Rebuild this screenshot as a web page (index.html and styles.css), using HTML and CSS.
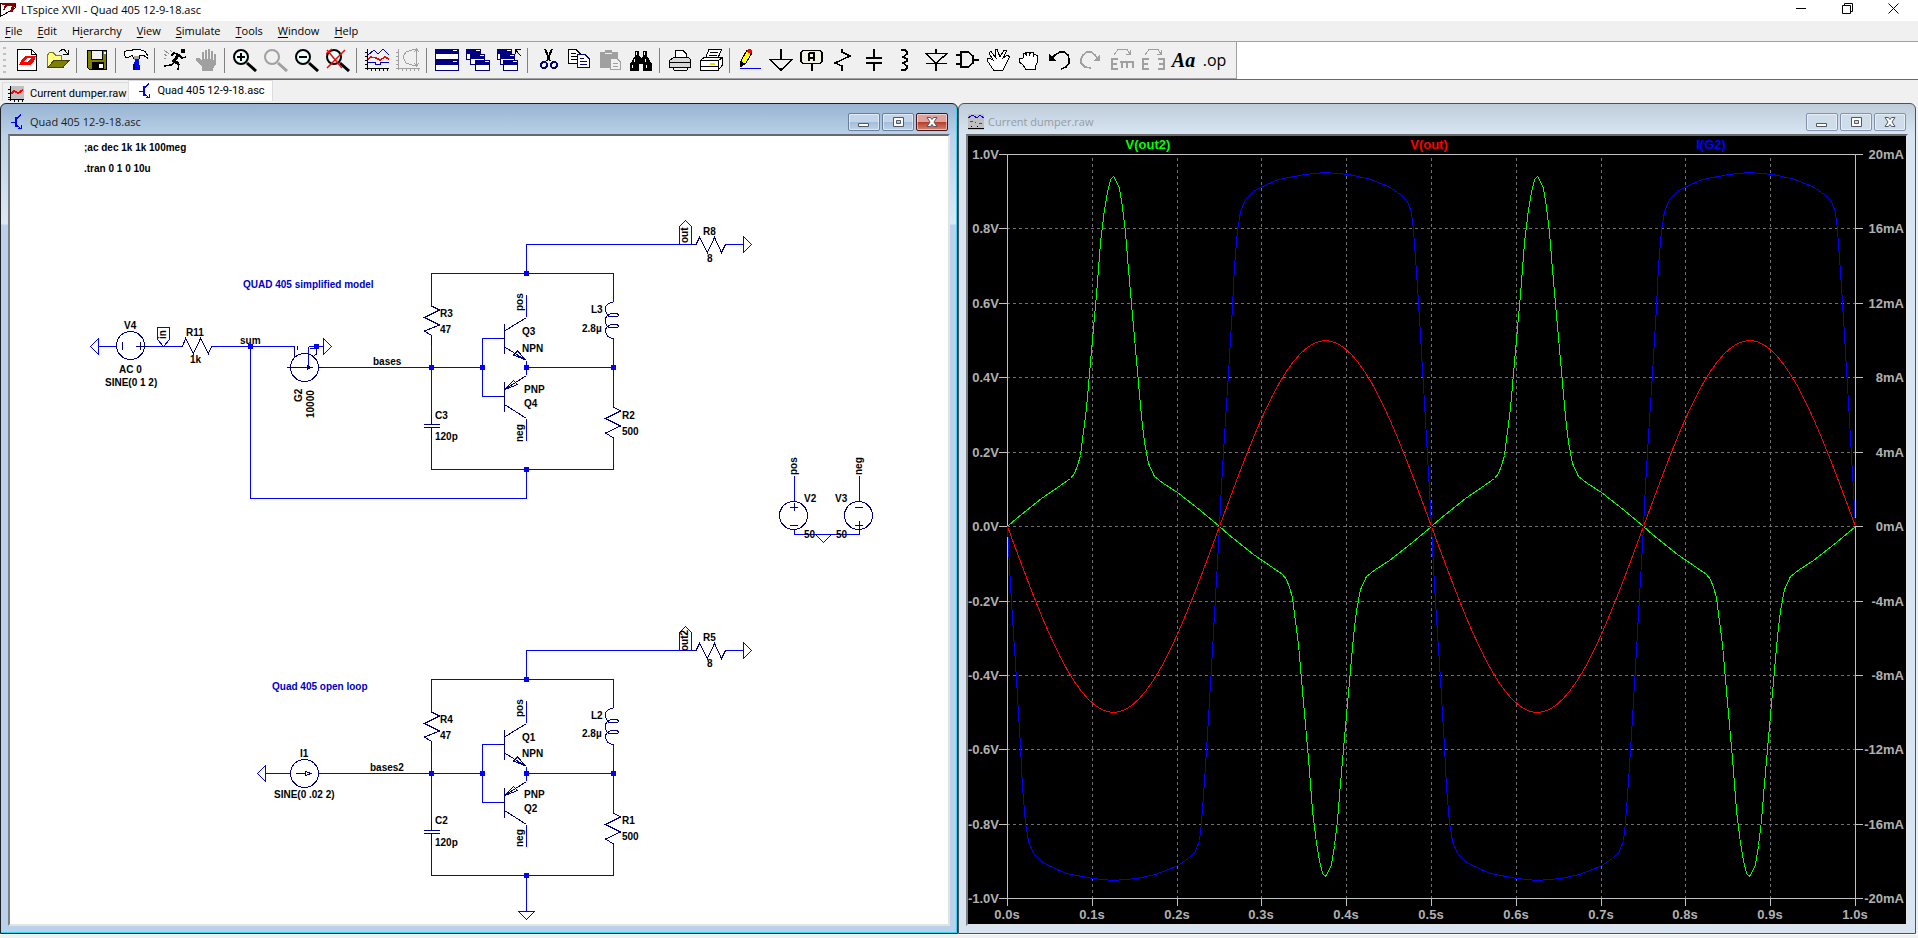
FILE: index.html
```html
<!DOCTYPE html>
<html lang="en">
<head>
<meta charset="utf-8">
<title>LTspice XVII - Quad 405 12-9-18.asc</title>
<link rel="stylesheet" href="styles.css">
</head>
<body>
<svg class="defs" aria-hidden="true">
  <defs>
    <g id="npn-icon" fill="none" stroke="#0000ff"><path d="M1 8.500H5M6 5.500L11 .5M6 10.500L11 15M8 14.500H11.500V11"/><path stroke-width="2" d="M6 3V13"/></g>
    <g id="lens"><circle cx="8" cy="9" r="7" stroke-width="2"/><path stroke-width="3" d="M14 15L23 23"/></g>
    <g id="win"><path fill="#000080" d="M0 0H15V4H0Z"/><path fill="#fff" stroke="#000080" d="M.5 4.500H14.500V10.500H.5Z"/><path stroke="#fff" d="M10 1.500H14"/></g>
  </defs>
</svg>

<header class="titlebar">
  <svg class="app-icon" viewBox="0 0 17 17"><path fill="#fff" stroke="#000" d="M.5 2V15.500L15 7V2Z"/><path fill="#8b0000" d="M2 2H16L13 11H10L12 5H7L5 9H3L5 4H2Z"/><path fill="#fff" d="M6 6H10L8 8H5Z"/></svg>
  <h1 class="app-title">LTspice XVII - Quad 405 12-9-18.asc</h1>
  <div class="caption">
    <button class="caption-btn" aria-label="Minimize"><svg viewBox="0 0 11 11"><path d="M0 5.500H10"/></svg></button>
    <button class="caption-btn" aria-label="Restore"><svg viewBox="0 0 11 11"><path d="M.5 2.500H8.500V10.500H.5ZM2.500 2.500V.5H10.500V8.500H8.500"/></svg></button>
    <button class="caption-btn" aria-label="Close"><svg viewBox="0 0 11 11"><path d="M.5.5L10.500 10.500M10.500.5L.5 10.500"/></svg></button>
  </div>
</header>

<nav class="menu">
  <button><u>F</u>ile</button><button><u>E</u>dit</button><button>H<u>i</u>erarchy</button><button><u>V</u>iew</button><button><u>S</u>imulate</button><button><u>T</u>ools</button><button><u>W</u>indow</button><button><u>H</u>elp</button>
</nav>

<div class="toolbar-row">
<div class="toolbar" role="toolbar">
  <span class="grip"></span>
  <button class="tool" aria-label="New schematic"><svg viewBox="0 0 24 24"><path fill="#fff" stroke="#000" d="M2.500 1.500H16.500L21.500 6.500V22.500H2.500Z"/><path fill="none" stroke="#000" d="M16.500 1.500V6.500H21.500"/><path fill="#f00" d="M10 8H15L12 10L9 14H12L9 17H4L6 13ZM14 8H21L19 13L15 17H9L13 14L16 10H13Z"/></svg></button>
  <button class="tool" aria-label="Open"><svg viewBox="0 0 24 24"><path fill="#ffff80" stroke="#808000" d="M1.500 19V7L3.500 4.500H7L9.500 7H15.500V12"/><path fill="#808000" stroke="#404000" d="M1.500 19.500L8 12.500H23L17 19.500Z"/><path fill="none" stroke="#000" d="M13 4L16 1.500H18L22 6M17 6.500H22.500V2"/></svg></button>
  <span class="sep"></span>
  <button class="tool" aria-label="Save"><svg viewBox="0 0 24 24"><path fill="#808000" stroke="#000" d="M2.500 2.500H21.500V21.500H4.500L2.500 19.500Z"/><path fill="#f0f0f0" stroke="#000" d="M6.500 2.500H17.500V11.500H6.500Z"/><path d="M7 14H19V21H7Z"/><path fill="#fff" d="M14 16H18V20H14ZM19 4H21V6H19Z"/></svg></button>
  <span class="sep"></span>
  <button class="tool" aria-label="Control panel"><svg viewBox="0 0 24 24"><path fill="#fff" stroke="#000" d="M.5 3.500L3 2.500H7L10 1.500H16L21 3.500L24 8V10.500L20 7.500H16L15 10.500H10L8 7.500L4 9.500H2L.5 7Z"/><path fill="#a0a0a0" d="M10 8H15V12H10Z"/><path fill="#0000ff" d="M11 11H15L16 22H9Z"/><path fill="#000080" d="M9 16H11V22H9Z"/></svg></button>
  <span class="sep"></span>
  <button class="tool" aria-label="Run"><svg viewBox="0 0 24 24"><path d="M18 1H22V5H18Z"/><path fill="none" stroke="#000" stroke-width="3" d="M16 6L11 13L16 16"/><path fill="none" stroke="#000" stroke-width="1.500" d="M16 16L15 22M8 8L11 5L16 7L19 10L23 9M12 14L8 17L1 18"/><path fill="none" stroke="#909090" d="M1 2L6 6M1 6L4 8M1 10L3 11M7 2L9 4"/></svg></button>
  <button class="tool" aria-label="Halt"><svg viewBox="0 0 24 24"><path fill="#a0a0a0" d="M8 22V19L2 13V10H5L8 13V4H10V11H11V2H13V11H14V1H16V11H17V3H19V12H20V6H22V16L19 21V23H8Z"/></svg></button>
  <span class="sep"></span>
  <button class="tool" aria-label="Zoom in"><svg class="soft" viewBox="0 0 24 24"><use href="#lens" fill="#e8ffff" stroke="#000"/><path stroke="#000" stroke-width="2" d="M8 5V13M4 9H12"/></svg></button>
  <button class="tool" aria-label="Pan"><svg class="soft" viewBox="0 0 24 24"><use href="#lens" fill="#f0f0f0" stroke="#a0a0a0"/></svg></button>
  <button class="tool" aria-label="Zoom out"><svg class="soft" viewBox="0 0 24 24"><use href="#lens" fill="#e8ffff" stroke="#000"/><path stroke="#000" stroke-width="2" d="M4 9H12"/></svg></button>
  <button class="tool" aria-label="Zoom full extents"><svg class="soft" viewBox="0 0 24 24"><use href="#lens" fill="#e8ffff" stroke="#000"/><path stroke="#f00" stroke-width="1.500" d="M1 2L16 20M19 2L1 20M0 6L6 1"/></svg></button>
  <span class="sep"></span>
  <button class="tool" aria-label="Autorange"><svg viewBox="0 0 24 24"><path fill="none" stroke="#000" d="M2.500 1V22M0 20.500H24M0 4.500H2M0 8.500H2M0 12.500H2M0 16.500H2M6.500 20V23M10.500 20V23M14.500 20V23M18.500 20V23M22.500 20V23"/><path fill="none" stroke="#0000c0" d="M3 7L9 2L13 6L18 1L24 7M3 14.500H10V16.500H15V14.500H24"/><path fill="none" stroke="#f00" stroke-width="1.500" d="M3 11L6 9L11 10L15 12L20 9L24 11"/></svg></button>
  <button class="tool" aria-label="Smith chart"><svg viewBox="0 0 24 24"><path fill="none" stroke="#a0a0a0" d="M2.500 1V22M0 20.500H24M0 4.500H2M0 8.500H2M0 12.500H2M0 16.500H2M6.500 20V23M10.500 20V23M14.500 20V23M18.500 20V23M22.500 20V23M19 1L10 4L7 9L10 15L19 18M20.500 2V18M18 4L20.500 1L23 4M18 15L20.500 18L23 15"/></svg></button>
  <span class="sep"></span>
  <button class="tool" aria-label="Tile windows"><svg viewBox="0 0 24 24"><path fill="#000080" d="M0 1H24V5H0ZM0 12H24V16H0Z"/><path fill="#fff" stroke="#000080" d="M.5 5.500H23.500V11.500H.5ZM.5 16.500H23.500V22.500H.5Z"/><path stroke="#fff" d="M18 2.500H22M18 13.500H22"/></svg></button>
  <button class="tool" aria-label="Cascade windows"><svg viewBox="0 0 24 24"><use href="#win" x="0" y="1"/><use href="#win" x="4" y="6"/><use href="#win" x="9" y="12"/></svg></button>
  <button class="tool" aria-label="Close windows"><svg viewBox="0 0 24 24"><use href="#win" x="0" y="1"/><use href="#win" x="3" y="6"/><use href="#win" x="6" y="12"/><path fill="none" stroke="#000" d="M18 6V1.500H24M18.500 2L24 8"/></svg></button>
  <span class="sep"></span>
  <button class="tool" aria-label="Cut"><svg viewBox="0 0 24 24"><path fill="none" stroke="#000" stroke-width="2" d="M9 1L14 13M16 1L11 13"/><g fill="none" stroke="#000080" stroke-width="2"><circle cx="8" cy="17" r="3"/><circle cx="18" cy="17" r="3"/></g></svg></button>
  <button class="tool" aria-label="Copy"><svg viewBox="0 0 24 24"><path fill="#fff" stroke="#000" d="M1.500 1.500H9L13.500 6V15.500H1.500Z"/><path stroke="#000" d="M4 5.500H9M4 8.500H10M4 11.500H10"/><path fill="#fff" stroke="#000080" d="M10.500 6.500H18L22.500 11V19.500H10.500Z"/><path stroke="#000080" d="M13 10.500H17M13 13.500H20M13 16.500H20"/></svg></button>
  <button class="tool" aria-label="Paste"><svg viewBox="0 0 24 24"><path fill="#a0a0a0" d="M2 4H7V2H14V4H20V20H2Z"/><path fill="#f0f0f0" stroke="#a0a0a0" d="M12.500 10.500H19L22.500 14V21.500H12.500Z"/><path stroke="#a0a0a0" d="M15 15.500H20M15 18.500H20"/><path fill="#f0f0f0" d="M7 5H14V6H7Z"/></svg></button>
  <button class="tool" aria-label="Find"><svg viewBox="0 0 24 24"><path d="M6 3H10V8L12 10L14 8V3H18V8L23 16V23H14V16H10V23H1V16L6 8Z"/><path fill="#fff" d="M7 4H8V7H7ZM15 4H16V7H15ZM5 11H6V14H5ZM16 11H17V14H16ZM3 17H4V20H3ZM17 17H18V20H17Z"/></svg></button>
  <span class="sep"></span>
  <button class="tool" aria-label="Print"><svg viewBox="0 0 24 24"><path fill="#fff" stroke="#000" d="M7.500 10V2.500H15L18.500 6V10"/><path fill="#d8d8d8" stroke="#000" d="M5.500 9.500H20.500L22.500 11.500V19.500H1.500V12.500Z"/><path stroke="#000" d="M2 14.500H22M6 22.500H19M5.500 19V22M19.500 19V22"/></svg></button>
  <button class="tool" aria-label="Print preview"><svg viewBox="0 0 24 24"><path fill="#fff" stroke="#000" d="M6.500 10L10 1.500H22.500L19 10"/><path stroke="#000" d="M11 4.500H19M10 7.500H18"/><path fill="#fff" stroke="#000" d="M1.500 12.500L5 9.500H23.500V17L19 22.500H1.500ZM1.500 12.500H19.500L23.500 9.500M19.500 12.500V22"/><path stroke="#000" d="M2 18.500H19"/><path stroke="#e8e000" stroke-width="2" d="M11 15.500H16"/></svg></button>
  <span class="sep"></span>
  <button class="tool" aria-label="Draw wire"><svg viewBox="0 0 24 24"><path fill="#ffff00" stroke="#000" d="M3.500 12L9 2L14 5L8 15L3.500 18Z"/><path fill="#f00" d="M8 3L10 1H13L14 3L13 6Z"/><path d="M2 13L6 15L2 19Z"/><path stroke="#0000ff" d="M2 20.500H23"/></svg></button>
  <button class="tool" aria-label="Ground"><svg viewBox="0 0 24 24"><path fill="none" stroke="#000" stroke-width="1.500" d="M12 1V11M1 11.500H23L12 22Z"/></svg></button>
  <button class="tool" aria-label="Label net"><svg viewBox="0 0 24 24"><path fill="#f0f0e0" stroke="#000" stroke-width="1.500" d="M3 2.500H20L22 4.500V13L20 15.500H3L1 13V4.500Z"/><path stroke="#000" stroke-width="1.500" d="M12 16V23"/><path fill="none" stroke="#000" stroke-width="2" d="M9 13V6L10 5H14V13M9 10H14"/></svg></button>
  <button class="tool" aria-label="Resistor"><svg viewBox="0 0 24 24"><path fill="none" stroke="#000" stroke-width="1.500" d="M11 1V4L19 8L4 15L11 18V23"/></svg></button>
  <button class="tool" aria-label="Capacitor"><svg viewBox="0 0 24 24"><path fill="none" stroke="#000" stroke-width="2" d="M4 10H20M4 15H20"/><path stroke="#000" stroke-width="1.500" d="M12 1V10M12 15V23"/></svg></button>
  <button class="tool" aria-label="Inductor"><svg viewBox="0 0 24 24"><path fill="none" stroke="#000" stroke-width="1.500" d="M8 2H12L14 4V6L10 9L14 11V13L10 15L14 18V20L12 22H8"/></svg></button>
  <button class="tool" aria-label="Diode"><svg viewBox="0 0 24 24"><path fill="none" stroke="#000" stroke-width="1.500" d="M12 1V5M2 5.500H23L12 15ZM2 15.500H23M12 15V23"/></svg></button>
  <button class="tool" aria-label="Component"><svg viewBox="0 0 24 24"><path fill="none" stroke="#000" stroke-width="1.500" d="M1 7H6M1 16H6M6 4V19H13L18 15V8L13 4ZM18 12H24"/></svg></button>
  <button class="tool" aria-label="Move"><svg viewBox="0 0 24 24"><path fill="#fff" stroke="#000" d="M7.500 22L1.500 13V10.500H4L7 12L3 5L5 3.500L10 10L9 2L11 1.500L14 9L18 2L20.500 3L17 10L22 7L23.500 9L19.500 17L17 22Z"/></svg></button>
  <button class="tool" aria-label="Drag"><svg viewBox="0 0 24 24"><path fill="#fff" stroke="#000" d="M8.500 21L6 17L2.500 14V10.500L6 10V6L8.500 5L9.500 8V4H12L12.500 8L13.500 4H16L16.500 8L18 6L20.500 8V14L18.500 18V21Z"/></svg></button>
  <button class="tool" aria-label="Undo"><svg viewBox="0 0 24 24"><path fill="none" stroke="#000" stroke-width="1.500" d="M4 10L7 7L12 4H16L20 7L21 11V15L18 19L13 21"/><path d="M1 6V13H8Z"/></svg></button>
  <button class="tool" aria-label="Redo"><svg viewBox="0 0 24 24"><path fill="none" stroke="#a0a0a0" stroke-width="1.500" d="M18 10L16 7L12 4H8L4 7L2 11V15L6 19L12 20"/><path fill="#a0a0a0" d="M21 6V13H14Z"/></svg></button>
  <button class="tool" aria-label="Rotate"><svg viewBox="0 0 24 24"><path fill="none" stroke="#a0a0a0" d="M4 7L8 1.500H17L20 6M16 6H20.500V2"/><path fill="none" stroke="#a0a0a0" stroke-width="2" d="M8 11H2V21H8M2 16H7M10 14H24M12 14V20M17 14V20M23 14V20"/></svg></button>
  <button class="tool" aria-label="Mirror"><svg viewBox="0 0 24 24"><path fill="none" stroke="#a0a0a0" d="M4 7L8 1.500H17L20 6M16 6H20.500V2"/><path fill="none" stroke="#a0a0a0" stroke-width="2" d="M8 11H2V21H8M2 16H7M17 11H23V21H17M23 16H18"/></svg></button>
  <button class="tool tool-text">Aa</button>
  <button class="tool tool-op">.op</button>
</div>
</div>

<div class="tabs" role="tablist">
  <button class="tab" role="tab"><svg class="tab-icon" viewBox="0 0 16 16"><path fill="#c0c0c0" d="M2 0H16V13H2Z"/><path stroke="#000" fill="none" d="M2.500 0V15M0 13.500H16M0 3.500H2M0 7.500H2M0 11H2M6.500 13V16M10.500 13V16M14.500 13V16"/><path fill="none" stroke="#f00" stroke-width="2" d="M3 8L6 5L10 7L15 4"/></svg>Current dumper.raw</button>
  <button class="tab tab-active" role="tab" aria-selected="true"><svg class="tab-icon" viewBox="0 0 16 16"><use href="#npn-icon"/></svg>Quad 405 12-9-18.asc</button>
</div>

<main class="workspace">
<section class="window window-active">
  <div class="window-title">
    <svg class="win-icon" viewBox="0 0 16 16"><use href="#npn-icon"/></svg>
    <h2>Quad 405 12-9-18.asc</h2>
    <button class="wbtn" aria-label="Minimize"><svg viewBox="0 0 14 12"><path d="M1.500 7.500H11.500V10.500H1.500Z"/></svg></button>
    <button class="wbtn" aria-label="Maximize"><svg viewBox="0 0 14 12"><path fill-rule="evenodd" d="M2.500 1.500H12.500V10.500H2.500ZM5.500 4.500V7.500H9.500V4.500Z"/></svg></button>
    <button class="wbtn wbtn-close" aria-label="Close"><svg viewBox="0 0 14 12"><path d="M2 1.500H5.500L7 3.500L8.500 1.500H12L9 6L12 10.500H8.500L7 8.500L5.500 10.500H2L5 6Z"/></svg></button>
  </div>
  <svg class="client schematic" viewBox="10 136 938 788">
    <defs>
      <g id="amp">
        <g class="wire">
          <path d="M526.500 273.500V244.500H696M431.500 306V273.500H613.500V302M431.500 336V424M431.500 428V469.500H613.500V438M613.500 338V407M431.500 367.500H482.500M499 338.500H482.500V396.500H499M526.500 361V375M526.500 367.500H613.500M526.500 295V317M526.500 419V441M725 244.500H743.500M743.500 236.500V252.500L751.500 244.500ZM679.500 244V226.500L685.500 220.500L691.500 226.500V244"/>
        </g>
        <g class="part">
          <path d="M431.500 306L439.500 310L424.500 317.500L439.500 325L424.500 331L431.500 335.500V345M424 424.500H440M424 427.500H440M431.500 415V424M431.500 428V439M499 338.500H504M504.500 324V354M504.500 331L526.500 317.500M504.500 347L526.500 360.500M526 360L513.500 355L517.500 351ZM499 396.500H504M504.500 382V412M526.500 375.500L504.500 389.500M505 389.500L513.500 380.500L517.500 384.500ZM504.500 404.500L526.500 418.500M613.500 407L620.500 411L605.500 418.500L620.500 426L605.500 433L613.500 438M692 244.500H696L699.500 237.500L707.500 252.500L714.500 237.500L721.500 252.500L725.500 244.500"/>
          <path d="M613.500 302.500Q605.500 303 605.500 309Q606 317 612 317Q619 317 619 315Q617 312.500 611 313.500Q605.500 315 605.500 320Q605.500 328 612 328Q619 328 619 326Q617 323.500 611 324.500Q605.500 326 605.500 331Q606 338 613.500 338.500"/>
        </g>
        <path class="node" d="M429 365h5v5h-5ZM480 365h5v5h-5ZM524 365h5v5h-5ZM611 365h5v5h-5ZM524 271h5v5h-5ZM524 467h5v5h-5Z"/>
      </g>
    </defs>
    <use href="#amp"/>
    <use href="#amp" y="406"/>
    <g class="wire">
      <path d="M98.500 338.500V354.500L90.500 346.500ZM98.500 346.500H116M149 346.500H182M157.500 327.500H169.500V339.500L163.500 346.500L157.500 339.500ZM211 346.500H294.500M250.500 346.500V498.500H526.500V469.500M318 367.500H431M308.500 346.500V367M308.500 346.500H323.500M323.500 338.500V354.500L331.500 346.500Z"/>
      <path d="M794.500 476V501M794.500 530V534.500H859.500V530M859.500 476V501M815.500 534.500L823.500 542.500L831.500 534.500"/>
      <path d="M265.500 765.500V781.500L257.500 773.500ZM265.500 773.500H290M318 773.500H431M526.500 875V911.500M518.500 911.500H534.500L526.500 919.500Z"/>
    </g>
    <g class="part">
      <circle cx="130.500" cy="345.500" r="14"/><circle cx="304.500" cy="367.500" r="14"/><circle cx="793.500" cy="515.500" r="14"/><circle cx="858.500" cy="515.500" r="14"/><circle cx="304.500" cy="773.500" r="14"/>
      <path d="M122.500 342V350M136 346.500H149M140.500 342V350M181 346.500H182.500L185.500 338.500L193.500 353.500L200.500 338.500L208.500 353.500L211.500 346.500M294.500 346V357L297 355M297.500 346V350M310 348.500H315M316.500 348V354L313 357M287 367.500H313M307 365.500L311.500 367.500L307 369.500ZM318 367.500H323"/>
      <path d="M790 507.500H798M794.500 503V511M790 525.500H798M855 507.500H863M855 525.500H863M859.500 521V534M296 773.500H305M305.500 771.500L311 773.500L305.500 775.500Z"/>
    </g>
    <path class="node" d="M248 344h5v5h-5ZM314 344h5v5h-5Z"/>
    <g class="label">
      <text x="84" y="151">;ac dec 1k 1k 100meg</text><text x="84" y="172">.tran 0 1 0 10u</text>
      <text class="note" x="243" y="288">QUAD 405 simplified model</text><text class="note" x="272" y="690">Quad 405 open loop</text>
      <text x="124" y="329">V4</text><text x="119" y="373">AC 0</text><text x="105" y="386">SINE(0 1 2)</text>
      <text x="186" y="336">R11</text><text x="190" y="363">1k</text><text x="240" y="344">sum</text><text x="373" y="365">bases</text>
      <text transform="translate(166 339) rotate(-90)">in</text><text transform="translate(302 402) rotate(-90)">G2</text><text transform="translate(314 418) rotate(-90)">10000</text>
      <text x="440" y="317">R3</text><text x="440" y="333">47</text><text x="435" y="419">C3</text><text x="435" y="440">120p</text>
      <text x="522" y="335">Q3</text><text x="522" y="352">NPN</text><text x="524" y="393">PNP</text><text x="524" y="407">Q4</text>
      <text transform="translate(523 311) rotate(-90)">pos</text><text transform="translate(523 442) rotate(-90)">neg</text>
      <text x="591" y="313">L3</text><text x="582" y="332">2.8µ</text><text x="622" y="419">R2</text><text x="622" y="435">500</text>
      <text transform="translate(688 243) rotate(-90)">out</text><text x="703" y="235">R8</text><text x="707" y="262">8</text>
      <text transform="translate(797 475) rotate(-90)">pos</text><text transform="translate(862 475) rotate(-90)">neg</text>
      <text x="804" y="502">V2</text><text x="835" y="502">V3</text><text x="804" y="538">50</text><text x="836" y="538">50</text>
      <text x="300" y="757">I1</text><text x="274" y="798">SINE(0 .02 2)</text><text x="370" y="771">bases2</text>
      <text x="440" y="723">R4</text><text x="440" y="739">47</text><text x="435" y="824">C2</text><text x="435" y="846">120p</text>
      <text x="522" y="741">Q1</text><text x="522" y="757">NPN</text><text x="524" y="798">PNP</text><text x="524" y="812">Q2</text>
      <text transform="translate(523 717) rotate(-90)">pos</text><text transform="translate(523 847) rotate(-90)">neg</text>
      <text x="591" y="719">L2</text><text x="582" y="737">2.8µ</text><text x="622" y="824">R1</text><text x="622" y="840">500</text>
      <text transform="translate(688 651) rotate(-90)">out2</text><text x="703" y="641">R5</text><text x="707" y="667">8</text>
    </g>
  </svg>
</section>

<section class="window">
  <div class="window-title">
    <svg class="win-icon" viewBox="0 0 16 16"><path fill="#c0c0c0" d="M0 0H16V16H0Z"/><path fill="none" stroke="#0000ff" d="M0 4L3 2L5 1L9 4L12 1L16 4"/><path stroke="#f00" d="M2 7.500H5M7 8.500H8M11 9.500H14"/><path stroke="#000" d="M0 14.500H16M3 12.500H4M9 12.500H10"/></svg>
    <h2>Current dumper.raw</h2>
    <button class="wbtn" aria-label="Minimize"><svg viewBox="0 0 14 12"><path d="M1.500 7.500H11.500V10.500H1.500Z"/></svg></button>
    <button class="wbtn" aria-label="Maximize"><svg viewBox="0 0 14 12"><path fill-rule="evenodd" d="M2.500 1.500H12.500V10.500H2.500ZM5.500 4.500V7.500H9.500V4.500Z"/></svg></button>
    <button class="wbtn" aria-label="Close"><svg viewBox="0 0 14 12"><path d="M2 1.500H5.500L7 3.500L8.500 1.500H12L9 6L12 10.500H8.500L7 8.500L5.500 10.500H2L5 6Z"/></svg></button>
  </div>
  <svg class="client plot" viewBox="968 136 938 788">
    <defs>
      <path id="v-out2" d="M0 0L9 -8L34 -28L53 -41L63 -48L67 -53L70 -61L73 -71L76 -95L79 -118L82 -153L85 -187L89 -232L93 -284L97 -317L100 -334L103 -347L106 -350L109 -345L112 -338L115 -319L118 -294L121 -257L126 -200L130 -155L134 -110L137 -84L141 -63L147 -50L156 -43L170 -34L193 -16L212 0"/>
      <path id="v-out" d="M0 0C35 95 68 186 106 186S177 95 212 0"/>
      <path id="i-g2" d="M0 0L2 41L5 91L9 153L13 220L15 260L18 296L21 315L26 327L34 335L43 340L59 347L85 352L106 354L129 352L148 348L169 340L181 332L188 325L192 314L194 296L197 255L200 208L204 141L208 71L212 0"/>
    </defs>
    <path class="grid" d="M1007 228.500H1855M1007 303.500H1855M1007 377.500H1855M1007 452.500H1855M1007 526.500H1855M1007 601.500H1855M1007 675.500H1855M1007 749.500H1855M1007 824.500H1855M1092.500 158V898M1177.500 158V898M1261.500 158V898M1346.500 158V898M1431.500 158V898M1516.500 158V898M1601.500 158V898M1685.500 158V898M1770.500 158V898"/>
    <path class="axis" d="M999 154.500H1863M999 898.500H1863M1007.500 154V906M1855.500 154V906M999 228.500H1007M999 303.500H1007M999 377.500H1007M999 452.500H1007M999 526.500H1007M999 601.500H1007M999 675.500H1007M999 749.500H1007M999 824.500H1007M1855 228.500H1863M1855 303.500H1863M1855 377.500H1863M1855 452.500H1863M1855 526.500H1863M1855 601.500H1863M1855 675.500H1863M1855 749.500H1863M1855 824.500H1863M1092.500 898V906M1177.500 898V906M1261.500 898V906M1346.500 898V906M1431.500 898V906M1516.500 898V906M1601.500 898V906M1685.500 898V906M1770.500 898V906"/>
    <g class="trace green" transform="translate(1007.5 526.500)"><use href="#v-out2"/><use href="#v-out2" transform="translate(212 0) scale(1 -1)"/><use href="#v-out2" x="424"/><use href="#v-out2" transform="translate(636 0) scale(1 -1)"/></g>
    <g class="trace red" transform="translate(1007.5 526.500)"><use href="#v-out"/><use href="#v-out" transform="translate(212 0) scale(1 -1)"/><use href="#v-out" x="424"/><use href="#v-out" transform="translate(636 0) scale(1 -1)"/></g>
    <g class="trace blue" transform="translate(1007.5 526.500)"><use href="#i-g2"/><use href="#i-g2" transform="translate(212 0) scale(1 -1)"/><use href="#i-g2" x="424"/><use href="#i-g2" transform="translate(636 0) scale(1 -1)"/></g>
    <g class="ticks mid">
      <text class="green" x="1148" y="149">V(out2)</text><text class="red" x="1429" y="149">V(out)</text><text class="blue" x="1711" y="149">I(G2)</text>
      <text x="1007" y="919">0.0s</text><text x="1092" y="919">0.1s</text><text x="1177" y="919">0.2s</text><text x="1261" y="919">0.3s</text><text x="1346" y="919">0.4s</text><text x="1431" y="919">0.5s</text><text x="1516" y="919">0.6s</text><text x="1601" y="919">0.7s</text><text x="1685" y="919">0.8s</text><text x="1770" y="919">0.9s</text><text x="1855" y="919">1.0s</text>
    </g>
    <g class="ticks end">
      <text x="999" y="159">1.0V</text><text x="999" y="233">0.8V</text><text x="999" y="308">0.6V</text><text x="999" y="382">0.4V</text><text x="999" y="457">0.2V</text><text x="999" y="531">0.0V</text><text x="999" y="606">-0.2V</text><text x="999" y="680">-0.4V</text><text x="999" y="754">-0.6V</text><text x="999" y="829">-0.8V</text><text x="999" y="903">-1.0V</text>
      <text x="1904" y="159">20mA</text><text x="1904" y="233">16mA</text><text x="1904" y="308">12mA</text><text x="1904" y="382">8mA</text><text x="1904" y="457">4mA</text><text x="1904" y="531">0mA</text><text x="1904" y="606">-4mA</text><text x="1904" y="680">-8mA</text><text x="1904" y="754">-12mA</text><text x="1904" y="829">-16mA</text><text x="1904" y="903">-20mA</text>
    </g>
  </svg>
</section>
</main>
<footer class="status"></footer>
</body>
</html>
```
FILE: styles.css
```css
* { box-sizing: border-box; }

body {
  margin: 0;
  height: 100vh;
  display: flex;
  flex-direction: column;
  overflow: hidden;
  background: #f0f0f0;
  color: #000;
  font: 11px/16px "Open Sans", "Noto Sans", sans-serif;
}

button { margin: 0; padding: 0; border: 0; background: none; font: inherit; color: inherit; }
h1, h2 { margin: 0; font-size: 11px; font-weight: 400; }
svg { display: block; }
.defs { position: absolute; width: 0; height: 0; }

.titlebar { display: flex; align-items: center; height: 21px; padding: 0 2px 2px 0; background: #fff; }
.app-icon { width: 17px; height: 17px; shape-rendering: crispEdges; }
.app-title { flex: 1; padding-left: 4px; }
.caption { display: flex; align-self: flex-start; }
.caption-btn { display: grid; place-items: center; width: 46px; height: 17px; }
.caption-btn svg { width: 11px; height: 11px; fill: none; stroke: #000; }

.menu { display: flex; gap: 15px; height: 21px; padding: 2px 5px 0; border-bottom: 1px solid #a0a0a0; }
.menu button { line-height: 16px; height: 16px; }
.menu u { text-underline-offset: 2px; }

.toolbar-row { display: flex; height: 38px; background: #fff; border-bottom: 1px solid #696969; }
.toolbar { display: flex; align-items: center; padding-right: 6px; background: #f0f0f0; border-right: 1px solid #a0a0a0; border-bottom: 1px solid #a0a0a0; }
.grip { width: 3px; height: 27px; margin: 0 5px 0 3px; background: repeating-linear-gradient(#c0c0c0 0 2px, #f0f0f0 2px 6px); }
.tool { display: grid; place-items: center; width: 31px; height: 32px; }
.tool svg { width: 24px; height: 24px; shape-rendering: crispEdges; }
.tool svg.soft { shape-rendering: auto; }
.tool-text { font: italic bold 20px/24px "Liberation Serif", serif; }
.tool-op { font: 16px/24px "Open Sans", sans-serif; }
.sep { width: 1px; height: 25px; margin: 0 4px 0 3px; background: #808080; }

.tabs { display: flex; align-items: flex-start; height: 23px; padding-left: 2px; font-family: Roboto, "Open Sans", sans-serif; }
.tab { display: flex; align-items: center; gap: 6px; height: 19px; margin-top: 2px; padding: 3px 2px 0 5px; border: solid #dcdcdc; border-width: 1px 0 0 1px; }
.tab-active { height: 21px; margin-top: 0; padding: 0 7px 1px 9px; gap: 3px; background: #fff; border: 1px solid #dcdcdc; border-bottom: 0; }
.tab-icon { width: 16px; height: 16px; shape-rendering: crispEdges; }

.workspace { flex: 1; min-height: 0; display: grid; grid-template-columns: 1fr 1fr; padding-right: 2px; }
.window {
  display: flex;
  flex-direction: column;
  min-width: 0;
  min-height: 0;
  padding: 0 7px 7px;
  border: 1px solid #505058;
  border-radius: 6px 6px 0 0;
  background: linear-gradient(#bfcddb 0, #d7e4f2 30px) #d7e4f2;
}
.window-active {
  border-color: #202024;
  box-shadow: inset -1px -1px #2fd8f8;
  background: linear-gradient(#99b4d1 0, #b9d1ea 31px, #dce9f5 120px, #b9d1ea 121px);
}
.window-title { display: flex; align-items: center; gap: 2px; height: 30px; padding: 6px 2px 0; flex: none; }
.window-title h2 { flex: 1; padding-left: 2px; color: #1c1c1c; }
.window:not(.window-active) h2 { color: #969ba2; }
.win-icon { width: 16px; height: 16px; shape-rendering: crispEdges; }
.wbtn {
  display: grid;
  place-items: center;
  width: 32px;
  height: 18px;
  border: 1px solid #6a7f9c;
  border-radius: 2px;
  box-shadow: inset 0 0 0 1px #ffffff80;
  background: linear-gradient(#c3d5ea 50%, #a3bcd9 50%, #bdd2ea);
}
.window:not(.window-active) .wbtn { border-color: #8291ad; background: #cfdcea; }
.wbtn svg { width: 14px; height: 12px; fill: #fff; stroke: #535666; }
.window .wbtn-close { border-color: #43141a; background: linear-gradient(#e0a39b 50%, #b83a26 50%, #d48671); }

.client { flex: 1; min-height: 0; width: 100%; border: 2px solid #e3e3e3; border-top-color: #696969; border-left-color: #808080; }
.schematic { background: #fff; shape-rendering: crispEdges; }
.plot { background: #000; shape-rendering: crispEdges; }

.wire { fill: none; stroke: #0000ff; }
.part { fill: none; stroke: #000080; }
.node { fill: #0000ff; }
.label { font: bold 10px "Liberation Sans", Arial, sans-serif; fill: #000; }
.note { fill: #0000c8; }

.grid { fill: none; stroke: #707070; stroke-dasharray: 3 3; }
.axis { fill: none; stroke: #c0c0c0; }
.trace { fill: none; }
.trace.green { stroke: #00ff00; }
.trace.red { stroke: #ff0000; }
.trace.blue { stroke: #0000ff; }
.ticks { font: bold 13px "Liberation Sans", Arial, sans-serif; fill: #b0b0b0; }
.mid { text-anchor: middle; }
.end { text-anchor: end; }
.ticks .green { fill: #00ff00; }
.ticks .red { fill: #ff0000; }
.ticks .blue { fill: #0000ff; }

.status { height: 4px; border-top: 1px solid #fff; }
```
